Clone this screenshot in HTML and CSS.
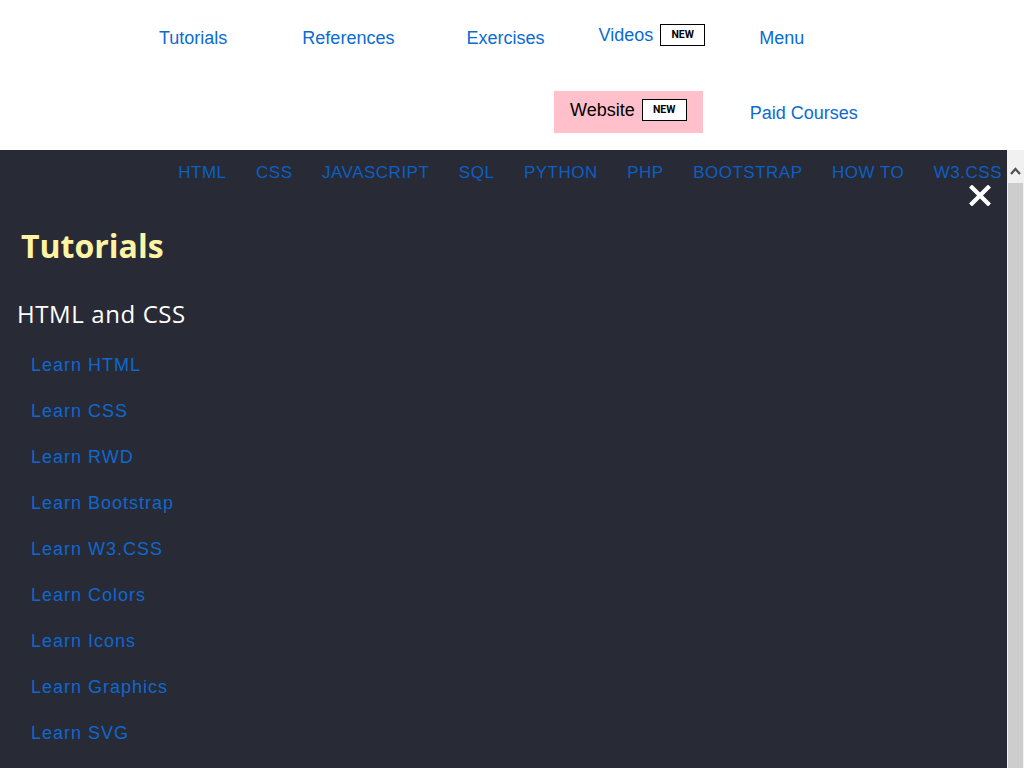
FILE: index.html
```html
<!DOCTYPE html>
<html lang="en">
<head>
<meta charset="utf-8">
<title>Tutorials</title>
<link rel="stylesheet" href="styles.css">
</head>
<body>
<header class="topbar">
  <nav class="toprow toprow-main">
    <a class="toplink" href="#">Tutorials</a>
    <a class="toplink toplink-refs" href="#">References</a>
    <a class="toplink toplink-ex" href="#">Exercises</a>
    <a class="toplink toplink-videos" href="#">Videos <span class="badge">NEW</span></a>
    <a class="toplink toplink-menu" href="#">Menu</a>
  </nav>
  <nav class="toprow toprow-sub">
    <a class="website" href="#">Website <span class="badge">NEW</span></a>
    <a class="toplink toplink-paid" href="#">Paid Courses</a>
  </nav>
</header>
<section class="panel">
  <div class="panel-body">
    <nav class="subnav">
      <a href="#">HTML</a>
      <a href="#">CSS</a>
      <a href="#">JAVASCRIPT</a>
      <a href="#">SQL</a>
      <a href="#">PYTHON</a>
      <a href="#">PHP</a>
      <a href="#">BOOTSTRAP</a>
      <a href="#">HOW TO</a>
      <a href="#">W3.CSS</a>
    </nav>
    <button class="close" type="button" aria-label="Close">
      <svg width="22" height="21" viewBox="0 0 22 21"><path d="M3 2.5 L19 18.5 M19 2.5 L3 18.5" stroke="#fff" stroke-width="4.2" stroke-linecap="square" fill="none"/></svg>
    </button>
    <h1 class="title">Tutorials</h1>
    <h2 class="group">HTML and CSS</h2>
    <ul class="links">
      <li><a href="#">Learn HTML</a></li>
      <li><a href="#">Learn CSS</a></li>
      <li><a href="#">Learn RWD</a></li>
      <li><a href="#">Learn Bootstrap</a></li>
      <li><a href="#">Learn W3.CSS</a></li>
      <li><a href="#">Learn Colors</a></li>
      <li><a href="#">Learn Icons</a></li>
      <li><a href="#">Learn Graphics</a></li>
      <li><a href="#">Learn SVG</a></li>
    </ul>
  </div>
  <div class="scrollbar">
    <div class="scroll-btn">
      <svg width="11" height="8" viewBox="0 0 11 8"><path d="M1 7 L5.5 2 L10 7" stroke="#505050" stroke-width="2.2" fill="none"/></svg>
    </div>
    <div class="scroll-thumb"></div>
  </div>
</section>
</body>
</html>
```
FILE: styles.css
```css
html, body {
  margin: 0;
  padding: 0;
  height: 768px;
  overflow: hidden;
  background: #fff;
  font-family: "Liberation Sans", Arial, sans-serif;
}

a { text-decoration: none; }

.topbar {
  height: 150px;
  box-sizing: border-box;
  background: #fff;
}

.toprow {
  display: flex;
  align-items: flex-start;
}

.toprow-main {
  padding: 24px 0 0 159px;
  height: 91px;
  box-sizing: border-box;
}

.toplink {
  color: #0b6bd3;
  font-size: 18px;
  line-height: 22px;
  margin-top: 3px;
  display: inline-flex;
  align-items: center;
}

.toplink-refs { margin-left: 75px; }
.toplink-ex { margin-left: 72px; }
.toplink-videos { margin-left: 54px; margin-top: 0; }
.toplink-menu { margin-left: 54px; }

.badge {
  display: inline-flex;
  align-items: center;
  justify-content: center;
  box-sizing: border-box;
  width: 45px;
  height: 22px;
  margin-left: 7px;
  border: 1.5px solid #000;
  background: #fff;
  color: #000;
  font-family: Roboto, "Liberation Sans", sans-serif;
  font-weight: 700;
  font-size: 10.5px;
  line-height: 1;
}

.toprow-sub {
  padding-left: 554px;
  align-items: center;
}

.website {
  display: flex;
  align-items: center;
  box-sizing: border-box;
  height: 42px;
  padding: 0 16px 4px 16px;
  background: #ffc0cb;
  color: #000;
  font-size: 18px;
  line-height: 22px;
}

.toplink-paid {
  margin-left: 47px;
  margin-top: 2px;
}

.panel {
  display: flex;
  height: 618px;
  background: #282a35;
  overflow: hidden;
}

.panel-body {
  position: relative;
  flex: 1;
  min-width: 0;
}

.subnav {
  display: flex;
  justify-content: flex-end;
  gap: 29.5px;
  height: 32px;
  box-sizing: border-box;
  padding: 14px 5px 0 0;
}

.subnav a {
  color: #0d5fc2;
  font-size: 17px;
  line-height: 18px;
  letter-spacing: 0.5px;
}

.close {
  position: absolute;
  top: 35px;
  right: 16px;
  width: 22px;
  height: 21px;
  padding: 0;
  border: 0;
  background: none;
  display: block;
}

.close svg { display: block; }

.title {
  margin: 44px 0 0 21px;
  font-family: "Open Sans", "Noto Sans", sans-serif;
  font-weight: 700;
  font-size: 32px;
  line-height: 40px;
  color: #fff4a3;
}

.group {
  margin: 32px 0 0 17px;
  font-family: "Open Sans", "Noto Sans", sans-serif;
  font-weight: 400;
  font-size: 24px;
  line-height: 32px;
  letter-spacing: 0.6px;
  color: #fff;
}

.links {
  list-style: none;
  margin: 12px 0 0 0;
  padding: 0 0 0 31px;
}

.links li {
  height: 46px;
  line-height: 46px;
}

.links a {
  color: #0f68cf;
  font-size: 18px;
  letter-spacing: 1px;
}

.scrollbar {
  width: 17px;
  flex: none;
  background: #f1f1f1;
  display: flex;
  flex-direction: column;
}

.scroll-btn {
  height: 33px;
  display: flex;
  justify-content: center;
  padding-top: 17px;
  box-sizing: border-box;
}

.scroll-btn svg { display: block; }

.scroll-thumb {
  flex: 1;
  margin: 0 1px;
  background: #cdcdcd;
}
```
